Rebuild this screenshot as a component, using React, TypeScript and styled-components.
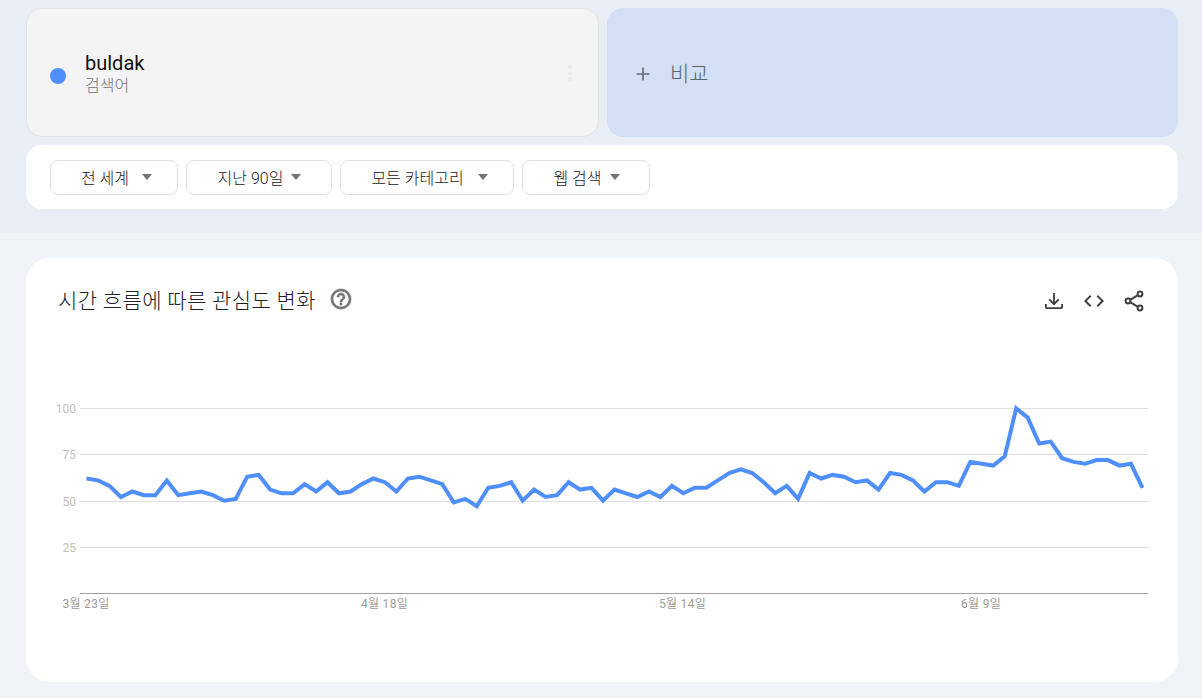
import React from "react";
import styled, { createGlobalStyle } from "styled-components";

const GlobalStyle = createGlobalStyle`
  html, body {
    margin: 0;
    padding: 0;
    background: #f0f4f9;
    font-family: Roboto, "Noto Sans CJK KR", sans-serif;
  }
`;

const Page = styled.div`
  width: 1202px;
  height: 698px;
  overflow: hidden;
`;

const TopSection = styled.section`
  height: 233px;
  box-sizing: border-box;
  padding: 8px 24px 0 26px;
  background: #e9eef6;
`;

const TermRow = styled.div`
  display: grid;
  grid-template-columns: 573px 571px;
  gap: 8px;
  height: 129px;
`;

const TermCard = styled.div`
  display: flex;
  align-items: center;
  box-sizing: border-box;
  padding: 0 26px 0 23px;
  background: #f4f4f4;
  border: 1px solid #e0e3e8;
  border-radius: 16px;
`;

const Dot = styled.span`
  width: 16px;
  height: 16px;
  border-radius: 50%;
  background: #4f8ffb;
  margin-right: 19px;
  margin-top: 6px;
`;

const TermText = styled.div`
  flex: 1;
  margin-top: 3px;
`;

const TermName = styled.div`
  font-size: 20px;
  font-weight: 400;
  line-height: 22px;
  color: #111;
`;

const TermType = styled.div`
  font-size: 16px;
  line-height: 20px;
  margin-top: 2px;
  font-weight: 300;
  color: #70757a;
`;

const MoreDots = styled.span`
  display: flex;
  flex-direction: column;
  gap: 2px;

  i {
    width: 4px;
    height: 4px;
    border-radius: 50%;
    background: #e9e9e9;
  }
`;

const CompareCard = styled.div`
  display: flex;
  align-items: center;
  box-sizing: border-box;
  padding: 2px 0 0 28px;
  background: #d3dff4;
  border-radius: 16px;
  color: #5f6368;
`;

const CompareLabel = styled.span`
  font-size: 21px;
  font-weight: 300;
  margin-left: 19px;
  margin-top: -4px;
`;

const FilterCard = styled.div`
  display: flex;
  align-items: center;
  gap: 8px;
  width: 1152px;
  height: 64px;
  box-sizing: border-box;
  margin-top: 8px;
  padding: 0 24px;
  background: #fff;
  border-radius: 16px;
`;

const FilterButton = styled.div<{ $width: number; $gap: number; $inset: number }>`
  display: flex;
  align-items: center;
  justify-content: center;
  gap: ${(p) => p.$gap}px;
  width: ${(p) => p.$width}px;
  height: 35px;
  box-sizing: border-box;
  padding-left: ${(p) => p.$inset}px;
  background: #fff;
  border: 1px solid #dfe1e5;
  border-radius: 8px;
  font-size: 16px;
  font-weight: 300;
  color: #202124;
`;

const Caret = styled.span`
  width: 0;
  height: 0;
  border-left: 5.5px solid transparent;
  border-right: 5.5px solid transparent;
  border-top: 6px solid #70757a;
`;

const ChartSection = styled.section`
  padding: 25px 24px 0 26px;
`;

const ChartCard = styled.div`
  width: 1152px;
  height: 424px;
  box-sizing: border-box;
  padding: 29px 32px 0;
  background: #fff;
  border-radius: 24px;
`;

const ChartHeader = styled.div`
  display: flex;
  align-items: center;
  height: 24px;
`;

const ChartTitle = styled.h2`
  margin: 0;
  font-size: 21px;
  font-weight: 300;
  letter-spacing: 0.35px;
  color: #202124;
`;

const HelpIcon = styled.svg`
  margin-left: 13px;
`;

const Actions = styled.div`
  display: flex;
  align-items: center;
  gap: 16px;
  margin-left: auto;
  margin-top: 4px;
`;

const ChartSvg = styled.svg`
  display: block;
  margin: 1px 0 0 -32px;
`;

const AxisText = styled.text<{ $spread?: boolean }>`
  font-family: Roboto, "Noto Sans CJK KR", sans-serif;
  font-size: 12px;
  letter-spacing: ${(p) => (p.$spread ? "0.3px" : "0")};
`;

const values = [
  62, 61, 58, 52, 55, 53, 53, 61, 53, 54, 55, 53, 50, 51, 63, 64, 56, 54, 54, 59, 55, 60, 54, 55,
  59, 62, 60, 55, 62, 63, 61, 59, 49, 51, 47, 57, 58, 60, 50, 56, 52, 53, 60, 56, 57, 50, 56, 54,
  52, 55, 52, 58, 54, 57, 57, 61, 65, 67, 65, 60, 54, 58, 51, 65, 62, 64, 63, 60, 61, 56, 65, 64,
  61, 55, 60, 60, 58, 71, 70, 69, 74, 100, 95, 81, 82, 73, 71, 70, 72, 72, 69, 70, 57,
];

// svg origin sits at the card's left edge, 312px down the page
const originX = 26;
const originY = 312;
const toX = (i: number) => 86.5 - originX + i * 11.478;
const toY = (v: number) => 593 - originY - v * 1.846;

const points = values.map((v, i) => `${toX(i).toFixed(1)},${toY(v).toFixed(1)}`).join(" ");

// gridlines land on these whole pixel rows
const ticks = [
  { value: 100, row: 96.5 },
  { value: 75, row: 142.5 },
  { value: 50, row: 189.5 },
  { value: 25, row: 235.5 },
];
const baseRow = 281.5;

const dates = [
  { label: "3월 23일", x: 86 },
  { label: "4월 18일", x: 384.5 },
  { label: "5월 14일", x: 682.5 },
  { label: "6월 9일", x: 981 },
];

const filters = [
  { label: "전 세계", width: 128, gap: 13, inset: 5 },
  { label: "지난 90일", width: 146, gap: 8, inset: 1 },
  { label: "모든 카테고리", width: 174, gap: 14, inset: 5 },
  { label: "웹 검색", width: 128, gap: 8, inset: 1 },
];

export default function App() {
  return (
    <Page>
      <GlobalStyle />
      <TopSection>
        <TermRow>
          <TermCard>
            <Dot />
            <TermText>
              <TermName>buldak</TermName>
              <TermType>검색어</TermType>
            </TermText>
            <MoreDots>
              <i />
              <i />
              <i />
            </MoreDots>
          </TermCard>
          <CompareCard>
            <svg width="16" height="16" viewBox="0 0 16 16">
              <path d="M8 1.5v13M1.5 8h13" stroke="#6b6f73" strokeWidth="1.7" fill="none" />
            </svg>
            <CompareLabel>비교</CompareLabel>
          </CompareCard>
        </TermRow>
        <FilterCard>
          {filters.map((f) => (
            <FilterButton key={f.label} $width={f.width} $gap={f.gap} $inset={f.inset}>
              {f.label}
              <Caret />
            </FilterButton>
          ))}
        </FilterCard>
      </TopSection>
      <ChartSection>
        <ChartCard>
          <ChartHeader>
            <ChartTitle>시간 흐름에 따른 관심도 변화</ChartTitle>
            <HelpIcon width="24" height="24" viewBox="0 0 24 24" fill="#70757a" stroke="#70757a" strokeWidth="0.7">
              <path d="M11 18h2v-2h-2v2zm1-16C6.48 2 2 6.48 2 12s4.48 10 10 10 10-4.48 10-10S17.52 2 12 2zm0 18c-4.41 0-8-3.59-8-8s3.59-8 8-8 8 3.59 8 8-3.59 8-8 8zm0-14c-2.21 0-4 1.79-4 4h2c0-1.1.9-2 2-2s2 .9 2 2c0 2-3 1.75-3 5h2c0-2.25 3-2.5 3-5 0-2.21-1.79-4-4-4z" />
            </HelpIcon>
            <Actions>
              <svg width="24" height="24" viewBox="0 0 24 24" fill="#3c4043">
                <path d="M12 16.4 6.6 11l1.3-1.3 3.2 3.2V4h1.8v8.9l3.2-3.2 1.3 1.3L12 16.4zM5 20c-.5 0-1-.2-1.4-.6-.4-.4-.6-.9-.6-1.4v-3h1.8v3c0 .1.1.2.2.2h14c.1 0 .2-.1.2-.2v-3H21v3c0 .5-.2 1-.6 1.4-.4.4-.9.6-1.4.6H5z" />
              </svg>
              <svg width="24" height="24" viewBox="0 0 24 24" fill="#3c4043">
                <path d="M9.4 16.6 4.8 12l4.6-4.6L8 6l-6 6 6 6 1.4-1.4zm5.2 0 4.6-4.6-4.6-4.6L16 6l6 6-6 6-1.4-1.4z" />
              </svg>
              <svg width="24" height="24" viewBox="0 0 24 24" fill="none" stroke="#3c4043" strokeWidth="2">
                <circle cx="18" cy="5" r="2.4" />
                <circle cx="6" cy="12" r="2.4" />
                <circle cx="18" cy="19" r="2.4" />
                <path d="m8.1 10.8 7.8-4.6M8.1 13.2l7.8 4.6" />
              </svg>
            </Actions>
          </ChartHeader>
          <ChartSvg width="1152" height="340" viewBox="0 0 1152 340">
            {ticks.map((t) => (
              <g key={t.value}>
                <line x1="54" x2="1122" y1={t.row} y2={t.row} stroke="#e0e0e0" strokeWidth="1" />
                <AxisText x="50" y={t.row + 4.5} textAnchor="end" fill="#c4bdb8">
                  {t.value}
                </AxisText>
              </g>
            ))}
            <line x1="54" x2="1122" y1={baseRow} y2={baseRow} stroke="#9e9e9e" strokeWidth="1" />
            <polyline points={points} fill="none" stroke="#4f8ffb" strokeWidth="4" strokeLinejoin="miter" />
            {dates.map((d) => (
              <AxisText
                key={d.label}
                $spread
                x={d.x - originX}
                y={baseRow + 14.5}
                textAnchor="middle"
                fill="#a09a96"
              >
                {d.label}
              </AxisText>
            ))}
          </ChartSvg>
        </ChartCard>
      </ChartSection>
    </Page>
  );
}
